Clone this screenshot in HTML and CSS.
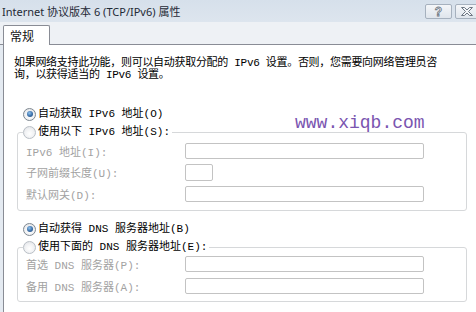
FILE: index.html
```html
<!DOCTYPE html>
<html lang="zh-CN">
<head>
<meta charset="utf-8">
<title>Internet 协议版本 6 (TCP/IPv6) 属性</title>
<link rel="stylesheet" href="styles.css">
</head>
<body>
<div class="window">
  <div class="titlebar">
    <span class="title">Internet 协议版本 6 (TCP/IPv6) 属性</span>
    <div class="tb-buttons">
      <span class="tb-btn help">?</span>
      <span class="tb-btn close"><svg width="14" height="11" viewBox="0 0 14 11"><path d="M1.5 1.5h3l2.5 2.5 2.5-2.5h3l-4 4 4 4h-3l-2.5-2.5-2.5 2.5h-3l4-4z" fill="#f3f5f8" stroke="#6d7783" stroke-width="1" stroke-linejoin="round"/></svg></span>
    </div>
  </div>
  <div class="tabstrip"><div class="tab">常规</div></div>
  <div class="pane">
    <p class="intro">如果网络支持此功能，则可以自动获取分配的 IPv6 设置。否则，您需要向网络管理员咨<br>询，以获得适当的 IPv6 设置。</p>
    <div class="option first"><span class="radio checked"></span>自动获取 IPv6 地址(O)</div>
    <fieldset class="group g1">
      <legend class="option"><span class="radio"></span>使用以下 IPv6 地址(S):</legend>
      <div class="field"><span class="label">IPv6 地址(I):</span><span class="input wide"></span></div>
      <div class="field"><span class="label">子网前缀长度(U):</span><span class="input short"></span></div>
      <div class="field f3"><span class="label">默认网关(D):</span><span class="input wide"></span></div>
    </fieldset>
    <div class="option second"><span class="radio checked"></span>自动获得 DNS 服务器地址(B)</div>
    <fieldset class="group g2">
      <legend class="option"><span class="radio"></span>使用下面的 DNS 服务器地址(E):</legend>
      <div class="field"><span class="label">首选 DNS 服务器(P):</span><span class="input wide"></span></div>
      <div class="field f3"><span class="label">备用 DNS 服务器(A):</span><span class="input wide"></span></div>
    </fieldset>
  </div>
  <div class="watermark">www.xiqb.com</div>
</div>
</body>
</html>
```
FILE: styles.css
```css
html, body {
  margin: 0;
  padding: 0;
}
body {
  width: 476px;
  height: 312px;
  overflow: hidden;
}
.window {
  position: relative;
  width: 476px;
  height: 312px;
  overflow: hidden;
  display: flex;
  flex-direction: column;
  background: #e4eaf1;
  font-family: "Liberation Mono", "Noto Sans CJK SC", monospace;
  font-size: 11px;
  color: #000;
}
.titlebar {
  height: 22px;
  flex: none;
  display: flex;
  align-items: center;
  padding-left: 2px;
  background: linear-gradient(#d6e0eb, #dde5ee);
  overflow: hidden;
}
.title {
  font-family: "Noto Sans", "Noto Sans CJK SC", sans-serif;
  font-size: 11px;
  color: #1f2a36;
  white-space: nowrap;
}
.tb-buttons {
  margin-left: auto;
  margin-right: -9px;
  align-self: flex-start;
  margin-top: 4px;
  display: flex;
  gap: 3px;
}
.tb-btn {
  box-sizing: border-box;
  height: 15px;
  border: 1px solid #a6b1be;
  border-radius: 2px;
  background: linear-gradient(#f4f6f9, #dfe5ec);
  display: flex;
  align-items: center;
  justify-content: center;
}
.help {
  width: 27px;
  font-family: "Liberation Sans", sans-serif;
  font-size: 12px;
  font-weight: bold;
  color: #f3f5f8;
  -webkit-text-stroke: 0.8px #6d7783;
}
.close {
  width: 30px;
  padding-right: 6px;
}
.tabstrip {
  box-sizing: border-box;
  height: 23px;
  flex: none;
  display: flex;
  align-items: flex-start;
  border-bottom: 1px solid #898c95;
  background: #eef1f5;
}
.tab {
  box-sizing: border-box;
  margin-top: 3px;
  margin-left: 3px;
  width: 47px;
  height: 20px;
  padding-left: 6px;
  border: 1px solid #898c95;
  border-bottom: none;
  border-radius: 2px 2px 0 0;
  background: #fff;
  font-family: "Noto Sans CJK SC", sans-serif;
  font-size: 12px;
  line-height: 19px;
  color: #111;
}
.pane {
  flex: 1;
  margin-left: 3px;
  border-left: 1px solid #898c95;
  background: #fff;
  padding: 12px 0 0 10px;
}
.intro {
  margin: 0;
  line-height: 12px;
  letter-spacing: -0.3px;
  white-space: nowrap;
}
.option {
  display: flex;
  align-items: center;
  height: 16px;
  line-height: 16px;
  white-space: nowrap;
}
.option.first {
  margin: 25px 0 0 9px;
}
.option.second {
  margin: 10px 0 0 9px;
}
.radio {
  box-sizing: border-box;
  width: 13px;
  height: 13px;
  margin-right: 2px;
  border-radius: 50%;
  border: 1px solid #b9bfc6;
  background: radial-gradient(circle at 50% 60%, #ffffff 0, #f1f2f4 50%, #dcdfe3 100%);
  display: flex;
  align-items: center;
  justify-content: center;
  flex: none;
}
.radio.checked {
  border-color: #7e8790;
}
.radio.checked::after {
  content: "";
  width: 6px;
  height: 6px;
  border-radius: 50%;
  background: radial-gradient(circle at 40% 35%, #8fc2ee 0, #3b6fa8 55%, #22497a 100%);
}
.group {
  box-sizing: border-box;
  width: 450px;
  margin: 2px 0 0 3px;
  padding: 3px 8px 8px 8px;
  border: 1px solid #d6d8da;
  border-radius: 3px;
  min-width: 0;
}
.group legend {
  padding: 0 2px 0 0;
  margin-left: -3px;
}
.g2 {
  padding-top: 1px;
  padding-bottom: 7px;
}
.field {
  display: flex;
  align-items: center;
  height: 16px;
  margin-top: 5px;
}
.field:first-of-type {
  margin-top: 0;
}
.field.f3 {
  margin-top: 6px;
}
.label {
  width: 159px;
  flex: none;
  color: #a2a2a2;
  white-space: nowrap;
}
.input {
  box-sizing: border-box;
  height: 16px;
  border: 1px solid #c3c3c3;
  border-radius: 2px;
  background: #fff;
}
.wide {
  width: 239px;
}
.short {
  width: 28px;
  height: 17px;
}
.watermark {
  position: absolute;
  left: 295px;
  top: 114px;
  font-family: "Liberation Mono", monospace;
  font-size: 18px;
  line-height: 18px;
  color: #7a55b0;
  white-space: nowrap;
}
```
